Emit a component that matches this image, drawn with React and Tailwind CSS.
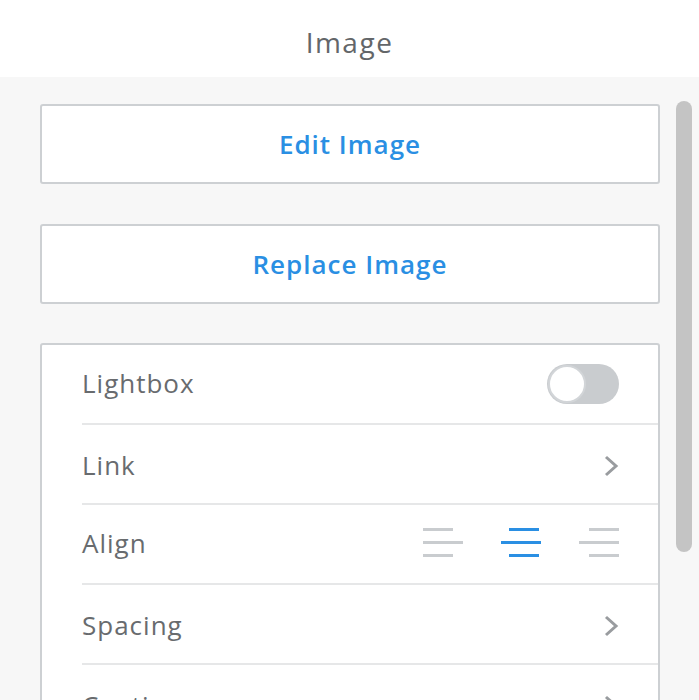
import React from 'react';

const font = { fontFamily: '"Open Sans", Lato, sans-serif' };

function Chevron() {
    return (
        <svg width="16" height="22" viewBox="0 0 16 22" className="block mt-[4px]">
            <polyline points="3,2 13,11 3,20" fill="none" stroke="#999c9f" strokeWidth="3" />
        </svg>
    );
}

function AlignIcon({ kind, active }) {
    const color = active ? '#2a8fe3' : '#c9cccf';
    let short = 0;
    if (kind === 'center') short = 8;
    if (kind === 'right') short = 10;
    return (
        <svg width="40" height="30" viewBox="0 0 40 30" className="block">
            <rect x={short} y="0" width="30" height="3" fill={color} />
            <rect x="0" y="13" width="40" height="3" fill={color} />
            <rect x={short} y="26" width="30" height="3" fill={color} />
        </svg>
    );
}

function Row({ label, shift, children }) {
    return (
        <div className="ml-[40px] h-[80px] flex items-center justify-between border-b-2 border-[#e6e7e8] pr-[39px]">
            <span className={`text-[26px] tracking-[1px] text-[#686b6e] leading-none ${shift ? 'mt-[1px]' : '-mt-[3px]'}`}>{label}</span>
            {children}
        </div>
    );
}

export default function App() {
    return (
        <div className="w-[699px] h-[700px] overflow-hidden bg-[#f7f7f7]" style={font}>
            <div className="h-[77px] bg-white flex items-center justify-center">
                <span className="text-[28px] tracking-[1.5px] text-[#636669] mt-[6px]">Image</span>
            </div>
            <div className="flex">
                <div className="w-[660px] pl-[40px] pt-[27px]">
                    <button className="w-full h-[80px] bg-white border-2 border-[#cdd0d3] rounded-[3px] text-[26px] tracking-[1px] font-semibold text-[#2a8fe3]">
                        Edit Image
                    </button>
                    <button className="mt-[40px] w-full h-[80px] bg-white border-2 border-[#cdd0d3] rounded-[3px] text-[26px] tracking-[1px] font-semibold text-[#2a8fe3]">
                        Replace Image
                    </button>
                    <div className="mt-[39px] bg-white border-2 border-[#cdd0d3] rounded-[3px]">
                        <Row label="Lightbox">
                            <div className="w-[72px] h-[40px] rounded-full bg-[#c9cccf] p-[1px]">
                                <div className="w-[38px] h-[38px] rounded-full bg-white border-2 border-[#d2d5d8]" />
                            </div>
                        </Row>
                        <Row label="Link" shift>
                            <Chevron />
                        </Row>
                        <Row label="Align">
                            <div className="flex gap-[38px] -mt-[3px]">
                                <AlignIcon kind="left" />
                                <AlignIcon kind="center" active />
                                <AlignIcon kind="right" />
                            </div>
                        </Row>
                        <Row label="Spacing" shift>
                            <Chevron />
                        </Row>
                        <Row label="Caption" shift>
                            <Chevron />
                        </Row>
                    </div>
                </div>
                <div className="pl-[16px] pt-[24px]">
                    <div className="w-[16px] h-[451px] rounded-full bg-[#c4c4c4]" />
                </div>
            </div>
        </div>
    );
}
